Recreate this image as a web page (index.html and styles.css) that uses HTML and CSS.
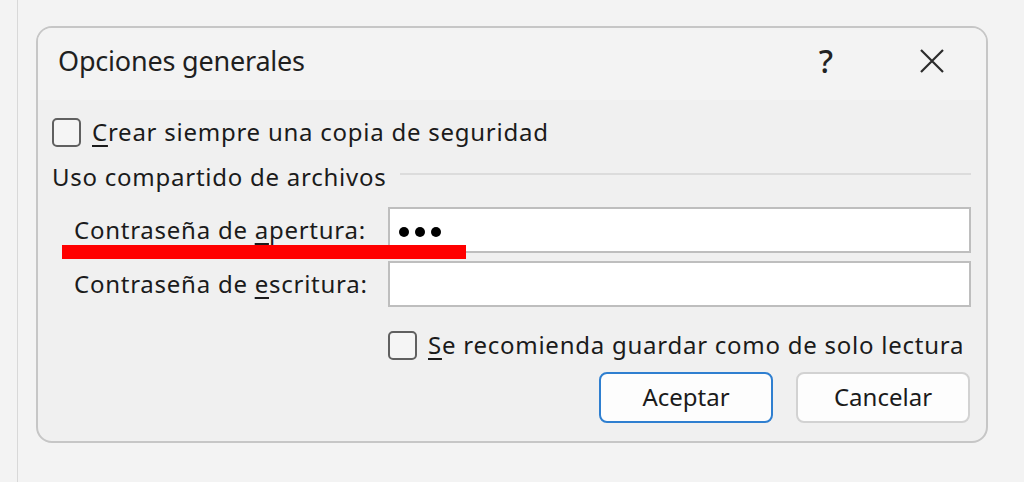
FILE: index.html
```html
<!DOCTYPE html>
<html lang="es">
<head>
<meta charset="utf-8">
<title>Opciones generales</title>
<link rel="stylesheet" href="styles.css">
</head>
<body>
<div class="page">
  <div class="gutter"></div>
  <div class="stage">
    <div class="dialog">
      <div class="titlebar">
        <div class="title">Opciones generales</div>
        <div class="caption-btns">
          <span class="help">?</span>
          <svg class="close" width="24" height="24" viewBox="0 0 24 24" aria-label="Cerrar">
            <path d="M1 1 L23 23 M23 1 L1 23" stroke="#2b2b2b" stroke-width="2.2" fill="none"/>
          </svg>
        </div>
      </div>
      <div class="body">
        <div class="check-row">
          <span class="box"></span>
          <span class="check-text"><u>C</u>rear siempre una copia de seguridad</span>
        </div>
        <div class="group-head">
          <span class="group-title">Uso compartido de archivos</span>
          <span class="rule"></span>
        </div>
        <div class="field-row">
          <span class="field-label">Contraseña de <u>a</u>pertura:</span>
          <div class="field" aria-label="•••"><span class="dot"></span><span class="dot"></span><span class="dot"></span></div>
        </div>
        <div class="field-row">
          <span class="field-label">Contraseña de <u>e</u>scritura:</span>
          <div class="field"></div>
        </div>
        <div class="check-row check-ro">
          <span class="box"></span>
          <span class="check-text"><u>S</u>e recomienda guardar como de solo lectura</span>
        </div>
        <div class="buttons">
          <button class="btn primary">Aceptar</button>
          <button class="btn">Cancelar</button>
        </div>
      </div>
    </div>
  </div>
  <div class="mark"></div>
</div>
</body>
</html>
```
FILE: styles.css
```css
html, body {
  margin: 0;
  height: 100%;
}
body {
  background: #f3f3f3;
  font-family: "Noto Sans", "Open Sans", sans-serif;
  color: #1b1b1b;
  overflow: hidden;
}
.page {
  position: relative;
  display: flex;
  height: 482px;
}
.gutter {
  flex: none;
  width: 17px;
  border-right: 1px solid #d8d8d8;
}
.stage {
  padding: 26px 0 0 18px;
}
.dialog {
  box-sizing: border-box;
  width: 952px;
  height: 417px;
  border: 2px solid #c6c6c6;
  border-radius: 16px;
  background: #f0f0f0;
  overflow: hidden;
  display: flex;
  flex-direction: column;
}
.titlebar {
  flex: none;
  box-sizing: border-box;
  height: 72px;
  background: #f3f3f3;
  display: flex;
  align-items: center;
  padding: 0 0 7px 20px;
}
.title {
  font-size: 27px;
  letter-spacing: -0.2px;
  color: #1f1f1f;
}
.caption-btns {
  margin-left: auto;
  display: flex;
  align-items: center;
  padding-right: 42px;
  gap: 74px;
}
.help {
  width: 40px;
  text-align: center;
  font-size: 32px;
  font-weight: 500;
  color: #222;
  line-height: 1;
}
.close {
  display: block;
}
.body {
  flex: 1;
  display: flex;
  flex-direction: column;
  padding: 18px 15px 18px 14px;
  font-size: 24px;
  letter-spacing: 0.75px;
  line-height: 1.2;
}
.check-row {
  display: flex;
  align-items: center;
  gap: 11px;
  height: 29px;
}
.box {
  flex: none;
  box-sizing: border-box;
  width: 29px;
  height: 29px;
  border: 2px solid #606060;
  border-radius: 5px;
  background: #f5f5f5;
}
u {
  text-decoration-thickness: 2px;
  text-underline-offset: 4px;
}
.group-head {
  margin-top: 17px;
  height: 26px;
  display: flex;
  align-items: center;
  gap: 14px;
}
.rule {
  flex: 1;
  height: 2px;
  background: #dcdcdc;
  margin-top: -6px;
}
.field-row {
  margin-top: 17px;
  display: flex;
  align-items: center;
}
.field-row + .field-row {
  margin-top: 8px;
}
.field-label {
  flex: none;
  box-sizing: border-box;
  width: 336px;
  padding-left: 22px;
}
.field {
  flex: 1;
  box-sizing: border-box;
  height: 46px;
  border: 2px solid #bebebe;
  background: #ffffff;
  display: flex;
  align-items: center;
  gap: 6px;
  padding: 4px 0 0 9px;
}
.dot {
  width: 10px;
  height: 10px;
  border-radius: 50%;
  background: #000;
}
.check-ro {
  margin-top: 24px;
  margin-left: 336px;
}
.buttons {
  margin-top: 12px;
  display: flex;
  justify-content: flex-end;
  gap: 23px;
  padding-right: 1px;
}
.btn {
  box-sizing: border-box;
  width: 174px;
  height: 51px;
  border-radius: 8px;
  border: 2px solid #d2d2d2;
  background: #fdfdfd;
  font: inherit;
  color: #1b1b1b;
  padding: 0;
}
.btn.primary {
  border-color: #2f7fd0;
}
.mark {
  position: absolute;
  left: 62px;
  top: 245px;
  width: 404px;
  height: 14px;
  background: #ff0000;
}
```
